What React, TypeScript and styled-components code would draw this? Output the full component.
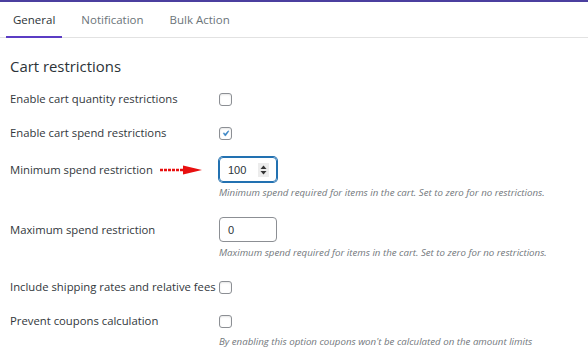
import styled, { createGlobalStyle } from 'styled-components';

const GlobalStyle = createGlobalStyle`
  html, body {
    margin: 0;
    padding: 0;
    background: #ffffff;
  }
  body {
    font-family: 'Open Sans', 'Noto Sans', sans-serif;
    color: #3c434a;
  }
`;

const Page = styled.div`
  width: 588px;
  height: 361px;
  overflow: hidden;
  border-top: 2px solid #4b3f9f;
  box-sizing: border-box;
  background: #fff;
`;

const TabBar = styled.nav`
  display: flex;
  gap: 12px;
  height: 35px;
  padding-left: 6px;
  border-bottom: 1px solid #e2e2e2;
`;

const Tab = styled.div<{ $active?: boolean }>`
  display: flex;
  align-items: center;
  padding: 0 7px;
  font-size: 11.5px;
  color: ${(p) => (p.$active ? '#2c3338' : '#6b7479')};
  border-bottom: 2px solid ${(p) => (p.$active ? '#5b3cc4' : 'transparent')};
  margin-bottom: -1px;
  padding-top: 1px;
`;

const Section = styled.section`
  padding: 18px 10px 0 10px;
`;

const Heading = styled.h2`
  margin: 0 0 13px 0;
  font-size: 14.9px;
  line-height: 20px;
  font-weight: 500;
  color: #2c3338;
`;

const Row = styled.div<{ $line: number }>`
  display: grid;
  grid-template-columns: 209px 1fr;
  margin-bottom: 14px;

  & > label {
    line-height: ${(p) => p.$line}px;
    height: ${(p) => p.$line}px;
  }
`;

const Label = styled.label`
  position: relative;
  font-size: 11.3px;
  color: #32373c;
  white-space: nowrap;
  display: flex;
  align-items: center;
`;

const Field = styled.div`
  display: flex;
  flex-direction: column;
  align-items: flex-start;
`;

const Control = styled.div<{ $line: number }>`
  display: flex;
  align-items: center;
  height: ${(p) => p.$line}px;
`;

const Box = styled.span`
  width: 13px;
  height: 13px;
  box-sizing: border-box;
  border: 1px solid #8c8f94;
  border-radius: 3px;
  background: #fff;
  display: inline-flex;
  align-items: center;
  justify-content: center;
  box-shadow: inset 0 1px 2px rgba(0, 0, 0, 0.1);
`;

const NumberBox = styled.div<{ $focus?: boolean }>`
  width: 58px;
  height: 25px;
  box-sizing: border-box;
  border: 1px solid ${(p) => (p.$focus ? '#2271b1' : '#8c8f94')};
  box-shadow: ${(p) => (p.$focus ? '0 0 0 1px #2271b1' : 'none')};
  border-radius: 4px;
  display: flex;
  align-items: center;
  justify-content: space-between;
  padding: 0 7px 0 8px;
  font-family: 'Liberation Sans', Arial, sans-serif;
  font-size: 11px;
  color: #2c3338;
`;

const Spinner = styled.span`
  width: 11px;
  height: 14px;
  background: #ececec;
  display: inline-flex;
  align-items: center;
  justify-content: center;
`;

const Description = styled.p`
  margin: 5px 0 4px 0;
  font-size: 9.7px;
  line-height: 12px;
  font-style: italic;
  color: #72777c;
  white-space: nowrap;
`;

const ArrowMark = styled.svg`
  position: absolute;
  left: 140px;
  top: 50%;
  transform: translateY(-50%);
`;

function Check({ checked }: { checked?: boolean }) {
  return (
    <Box>
      {checked && (
        <svg width="13" height="13" viewBox="0 0 20 20">
          <path d="M14.83 4.89l1.34.94-5.81 8.38H9.02L5.78 9.67l1.34-1.25 2.57 2.4z" fill="#3582c4" stroke="#3582c4" strokeWidth="0.8" />
        </svg>
      )}
    </Box>
  );
}

function RedArrow() {
  return (
    <ArrowMark width="54" height="12" viewBox="0 0 54 12">
      <path d="M10 6 H36" stroke="#e81010" strokeWidth="2.6" strokeDasharray="3 1" />
      <path d="M33 1.5 L52 6 L33 10.5 Z" fill="#e81010" />
    </ArrowMark>
  );
}

export default function App() {
  return (
    <>
      <GlobalStyle />
      <Page>
        <TabBar>
          <Tab $active>General</Tab>
          <Tab>Notification</Tab>
          <Tab>Bulk Action</Tab>
        </TabBar>
        <Section>
          <Heading>Cart restrictions</Heading>

          <Row $line={20}>
            <Label>Enable cart quantity restrictions</Label>
            <Field>
              <Control $line={20}>
                <Check />
              </Control>
            </Field>
          </Row>

          <Row $line={20}>
            <Label>Enable cart spend restrictions</Label>
            <Field>
              <Control $line={20}>
                <Check checked />
              </Control>
            </Field>
          </Row>

          <Row $line={25}>
            <Label>
              Minimum spend restriction
              <RedArrow />
            </Label>
            <Field>
              <Control $line={25}>
                <NumberBox $focus>
                  100
                  <Spinner>
                    <svg width="7" height="10" viewBox="0 0 7 10">
                      <path d="M3.5 0.5 L6.5 4 H0.5 Z" fill="#333" />
                      <path d="M3.5 9.5 L6.5 6 H0.5 Z" fill="#333" />
                    </svg>
                  </Spinner>
                </NumberBox>
              </Control>
              <Description>Minimum spend required for items in the cart. Set to zero for no restrictions.</Description>
            </Field>
          </Row>

          <Row $line={25}>
            <Label>Maximum spend restriction</Label>
            <Field>
              <Control $line={25}>
                <NumberBox>0</NumberBox>
              </Control>
              <Description>Maximum spend required for items in the cart. Set to zero for no restrictions.</Description>
            </Field>
          </Row>

          <Row $line={20}>
            <Label>Include shipping rates and relative fees</Label>
            <Field>
              <Control $line={20}>
                <Check />
              </Control>
            </Field>
          </Row>

          <Row $line={20}>
            <Label>Prevent coupons calculation</Label>
            <Field>
              <Control $line={20}>
                <Check />
              </Control>
              <Description>By enabling this option coupons won't be calculated on the amount limits</Description>
            </Field>
          </Row>
        </Section>
      </Page>
    </>
  );
}
